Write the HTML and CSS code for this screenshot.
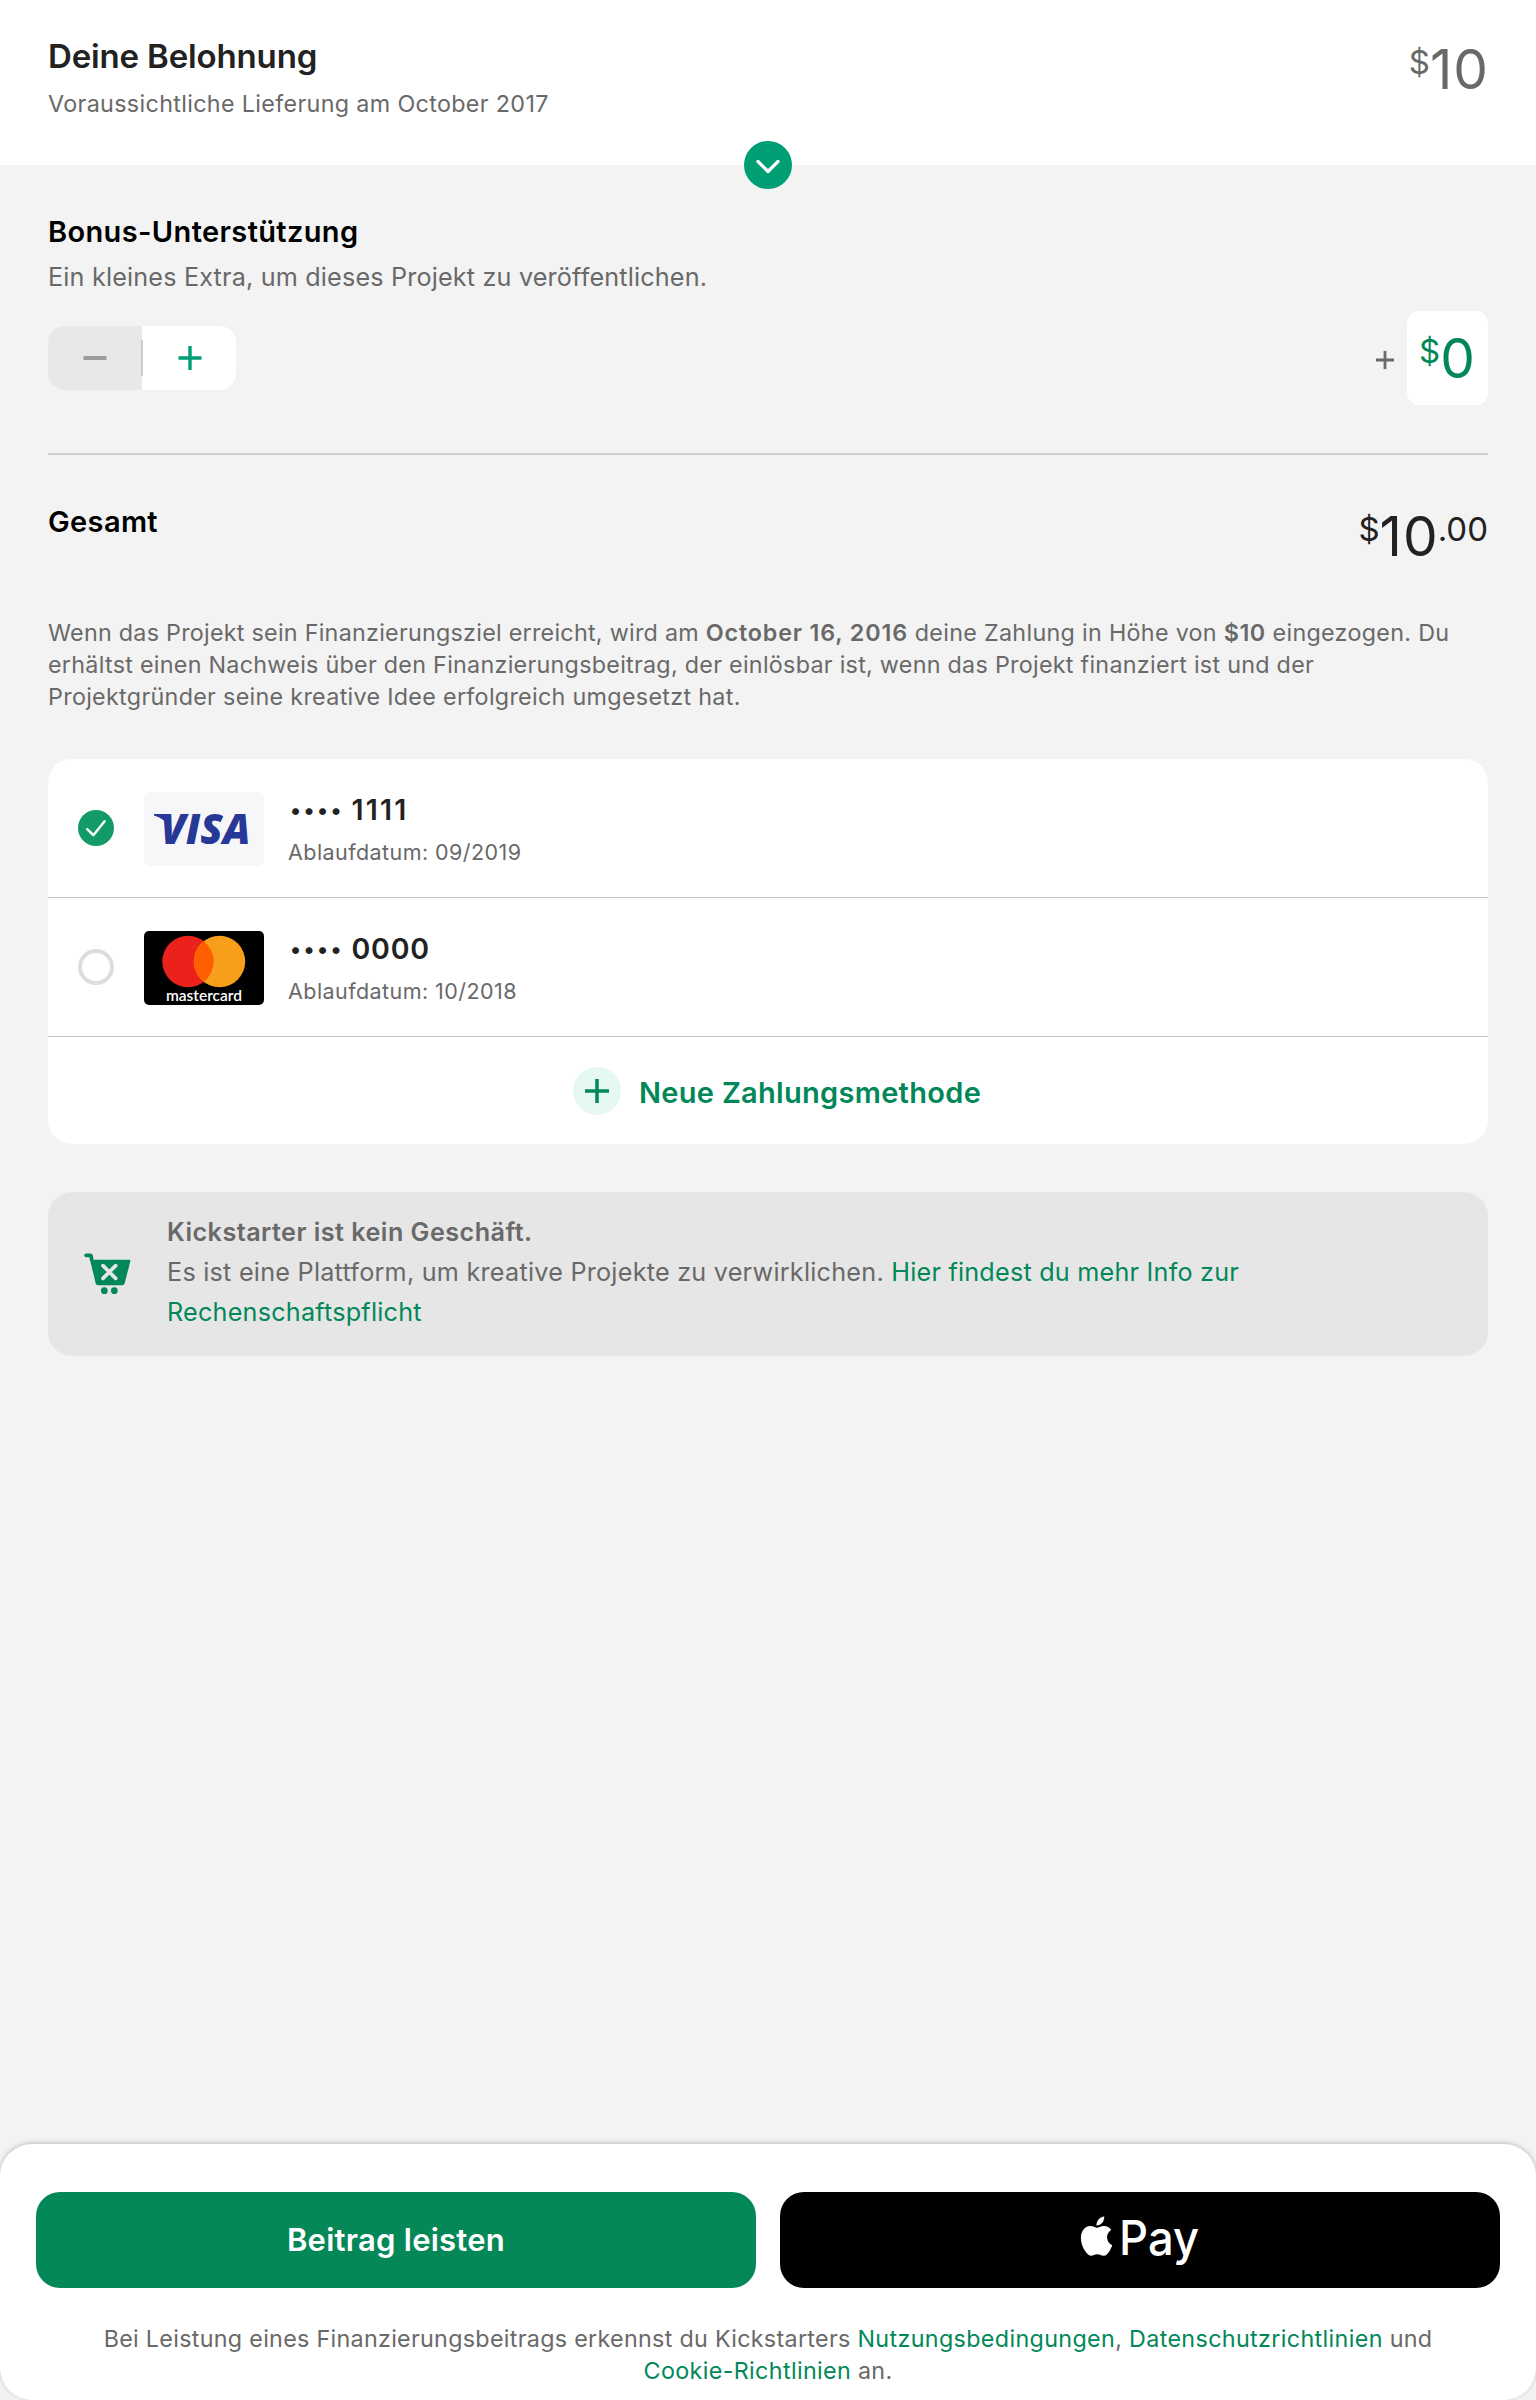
FILE: index.html
```html
<!DOCTYPE html>
<html lang="de">
<head>
<meta charset="utf-8">
<title>Beitrag leisten</title>
<link rel="stylesheet" href="styles.css">
</head>
<body>
<header class="reward">
  <div>
    <h1 class="reward-title">Deine Belohnung</h1>
    <p class="reward-date">Voraussichtliche Lieferung am October 2017</p>
  </div>
  <div class="price price-muted"><span class="small">$</span><span class="big">10</span></div>
  <button class="expand" aria-label="Details"><svg width="48" height="48" viewBox="0 0 48 48"><path d="M14 20.500 24 30.500 34 20.500" fill="none" stroke="#fff" stroke-width="3.200" stroke-linecap="round" stroke-linejoin="round"/></svg></button>
</header>
<main class="content">
  <h2 class="heading heading-bonus">Bonus-Unterstützung</h2>
  <p class="bonus-text">Ein kleines Extra, um dieses Projekt zu veröffentlichen.</p>
  <div class="bonus-row">
    <div class="stepper">
      <button class="step step-minus" aria-label="Weniger"><svg width="24" height="24"><path d="M0.500 12H23.500" stroke="#9b9e9d" stroke-width="4"/></svg></button>
      <i class="step-divider"></i>
      <button class="step step-plus" aria-label="Mehr"><svg width="24" height="24"><path d="M0.500 12H23.500M12 0V24" stroke="#009e74" stroke-width="3.400"/></svg></button>
    </div>
    <div class="bonus-amount">
      <svg class="plus-sign" width="18" height="18"><path d="M0 9H18M9 0V18" stroke="#696969" stroke-width="2.800"/></svg>
      <div class="amount-box"><div class="price"><span class="small">$</span><span class="big">0</span></div></div>
    </div>
  </div>
  <hr class="rule">
  <div class="total">
    <h2 class="heading">Gesamt</h2>
    <div class="price price-total"><span class="small">$</span><span class="big">10</span><span class="small">.00</span></div>
  </div>
  <p class="info"><span class="info-start">Wenn das Projekt sein Finanzierungsziel erreicht, wird am </span><b class="info-date">October 16, 2016</b> deine Zahlung in Höhe von <b class="info-sum">$10</b> eingezogen. Du<br><span class="info-middle">erhältst einen Nachweis über den Finanzierungsbeitrag, der einlösbar ist, wenn das Projekt finanziert ist und der</span><br>Projektgründer seine kreative Idee erfolgreich umgesetzt hat.</p>
  <section class="cards">
    <div class="card-row">
      <svg class="radio" width="36" height="36"><circle cx="18" cy="18" r="18" fill="#129b67"/><path d="M9.200 19.200 15.300 25.200 26.600 11.300" fill="none" stroke="#fff" stroke-width="2.400" stroke-linecap="round" stroke-linejoin="round"/></svg>
      <svg class="brand" width="120" height="74"><rect width="120" height="74" rx="6" fill="#f7f7fa"/><path d="M10 22H24L26 36Q20 26 10 23.500Z" fill="#283897"/><text x="16.500" y="52" class="visa" textLength="90" lengthAdjust="spacingAndGlyphs">VISA</text></svg>
      <div><p class="card-number"><span class="dots">••••</span><span class="digits-ones">1111</span></p><p class="card-date">Ablaufdatum: 09/2019</p></div>
    </div>
    <div class="card-row">
      <svg class="radio" width="36" height="36"><circle cx="18" cy="18" r="16" fill="#fff" stroke="#dcdedd" stroke-width="4"/></svg>
      <svg class="brand" width="120" height="74"><rect width="120" height="74" rx="5" fill="#000"/><circle cx="44" cy="30.500" r="25.700" fill="#eb221c"/><circle cx="75.500" cy="30.500" r="25.700" fill="#f79f1b"/><path d="M59.750 10.200A25.700 25.700 0 0 1 59.750 50.800A25.700 25.700 0 0 1 59.750 10.200Z" fill="#ff5f01"/><text x="22" y="69.500" class="mastercard" textLength="76" lengthAdjust="spacingAndGlyphs">mastercard</text></svg>
      <div><p class="card-number"><span class="dots">••••</span><span class="digits-zeros">0000</span></p><p class="card-date">Ablaufdatum: 10/2018</p></div>
    </div>
    <button class="card-new">
      <svg width="48" height="48"><circle cx="24" cy="24" r="24" fill="#e6f9f1"/><path d="M12 24H36M24 12V36" stroke="#028858" stroke-width="3.500"/></svg>
      <span class="card-new-label">Neue Zahlungsmethode</span>
    </button>
  </section>
  <section class="notice">
    <svg class="cart" width="47" height="42" viewBox="42 40 141 126"><path d="M48 47H61Q63 47 64 52L65 60" fill="none" stroke="#028858" stroke-width="11" stroke-linecap="round"/><path d="M60 60H178Q182 60 181 65L164 131Q162 137 157 137H84Q79 137 77 131Z" fill="#028858"/><path d="M99 78 137 116M137 78 99 116" stroke="#e6e6e6" stroke-width="11" stroke-linecap="round"/><circle cx="103" cy="153" r="10" fill="#028858"/><circle cx="133" cy="153" r="10" fill="#028858"/></svg>
    <p class="notice-text"><b>Kickstarter ist kein Geschäft.</b><br>Es ist eine Plattform, um kreative Projekte zu verwirklichen. <a class="notice-link">Hier findest du mehr Info zur<br>Rechenschaftspflicht</a></p>
  </section>
</main>
<footer class="footer">
  <div class="actions">
    <button class="pledge">Beitrag leisten</button>
    <button class="applepay"><svg width="130" height="90" viewBox="-5 -15 130 90"><path transform="translate(-2.700 6.500) scale(1.605 1.637)" fill="#fff" d="M12.152 6.896c-.948 0-2.415-1.078-3.960-1.040-2.040.027-3.910 1.183-4.961 3.014-2.117 3.675-.546 9.103 1.519 12.090 1.013 1.454 2.208 3.090 3.792 3.039 1.520-.065 2.090-.987 3.935-.987 1.831 0 2.350.987 3.960.948 1.637-.026 2.676-1.480 3.676-2.948 1.156-1.688 1.636-3.325 1.662-3.415-.039-.013-3.182-1.221-3.220-4.857-.026-3.040 2.480-4.494 2.597-4.559-1.429-2.090-3.623-2.324-4.390-2.376-2-.156-3.675 1.090-4.610 1.090zM15.530 3.830c.843-1.012 1.400-2.427 1.245-3.830-1.207.052-2.662.805-3.532 1.818-.780.896-1.454 2.338-1.273 3.714 1.338.104 2.715-.688 3.559-1.701"/><text x="39" y="45" class="pay" textLength="80" lengthAdjust="spacingAndGlyphs">Pay</text></svg></button>
  </div>
  <p class="terms">Bei Leistung eines Finanzierungsbeitrags erkennst du Kickstarters <a>Nutzungsbedingungen</a>, <a>Datenschutzrichtlinien</a> und<br><a>Cookie-Richtlinien</a> an.</p>
</footer>
</body>
</html>
```
FILE: styles.css
```css
* { box-sizing: border-box; margin: 0; padding: 0; }
body {
  display: flex; flex-direction: column; height: 2400px;
  background: #f3f3f3; color: #696969;
  font-family: Inter, "Liberation Sans", sans-serif;
}
svg { display: block; flex: none; }
button { border: 0; background: none; font: inherit; color: inherit; }
b { font-weight: 600; }
a { color: #028858; text-decoration: none; }

.reward {
  position: relative; display: flex; justify-content: space-between;
  height: 165px; padding: 36px 48px 0; background: #fff;
}
.reward-title { font-size: 33px; line-height: 40px; font-weight: 600; letter-spacing: -.15px; color: #222; }
.reward-date { margin-top: 12px; font-size: 23.3px; line-height: 32px; letter-spacing: .345px; }
.expand {
  position: absolute; left: 744px; bottom: -24px; width: 48px; height: 48px;
  border-radius: 50%; background: #009e74;
}

.price { display: flex; align-items: flex-start; }
.big { margin-right: -1px; font-size: 55px; line-height: 60px; letter-spacing: 1px; }
.small { padding-top: 3px; font-size: 33px; line-height: 40px; }
.price-muted { margin-top: 3px; }
.price-total { margin-top: 2px; color: #222; }

.content { padding: 48px 48px 0; }
.heading { font-size: 29px; line-height: 36px; font-weight: 600; letter-spacing: .36px; color: #000; }
.heading-bonus { margin: 1px 0 -1px; }
.bonus-text { margin-top: 12px; font-size: 25.2px; line-height: 32px; letter-spacing: .17px; }
.bonus-row { display: flex; justify-content: space-between; align-items: center; height: 94px; margin-top: 18px; }
.stepper { display: flex; align-items: center; width: 188px; height: 64px; overflow: hidden; border-radius: 16px; background: #fff; }
.step { display: flex; align-items: center; justify-content: center; height: 64px; width: 94px; }
.step-minus { background: #e8e8e8; }
.step-plus { padding-left: 2px; }
.step-divider { width: 2px; height: 36px; margin: 0 -1px; background: #cbcbcb; }
.bonus-amount { display: flex; align-items: center; gap: 13px; }
.plus-sign { margin-top: 4px; }
.amount-box { width: 81px; height: 94px; padding: 17px 0 0 12px; border-radius: 12px; background: #fff; color: #028858; }
.rule { height: 2px; margin-top: 48px; border: 0; background: #d1d1d1; }
.total { display: flex; justify-content: space-between; align-items: flex-start; margin-top: 49px; height: 64px; }
.info { margin: 49px 0 -1px; font-size: 23.3px; line-height: 32px; letter-spacing: .31px; white-space: nowrap; }
.info-start { letter-spacing: .264px; }
.info-middle { letter-spacing: .28px; }
.info-date { letter-spacing: .85px; }
.info-sum { letter-spacing: .5px; }

.cards { margin-top: 47px; height: 385px; border-radius: 24px; background: #fff; }
.card-row { display: flex; align-items: flex-start; height: 139px; padding: 33px 30px 0; border-bottom: 1px solid #c4c4c4; }
.radio { margin-top: 18px; }
.brand { margin: 0 24px 0 30px; }
.visa { font: italic 800 42px "Open Sans", sans-serif; fill: #283897; }
.mastercard { font: 600 15.5px Lato, sans-serif; fill: #fff; }
.card-number { display: flex; font-size: 28.5px; line-height: 36px; font-weight: 600; color: #222; }
.dots { width: 63.5px; padding: 2px 0 0 2px; font-size: 22px; line-height: 32px; letter-spacing: 2.4px; }
.digits-ones { letter-spacing: 2.2px; }
.digits-zeros { letter-spacing: .8px; }
.card-date { margin-top: 10px; font-size: 21.5px; line-height: 28px; letter-spacing: .44px; }
.card-new { display: flex; align-items: center; gap: 18px; height: 108px; padding-left: 525px; color: #028858; }
.card-new-label { padding-top: 3px; font-size: 29px; line-height: 36px; font-weight: 600; letter-spacing: .3px; }

.notice { display: flex; align-items: center; gap: 36px; height: 164px; margin-top: 48px; padding: 0 36px; border-radius: 24px; background: #e6e6e6; }
.notice-text { margin-top: -4px; font-size: 25.2px; line-height: 40px; letter-spacing: .24px; white-space: nowrap; }
.notice-text b { letter-spacing: .46px; }
.notice-link { letter-spacing: .22px; }

.footer { height: 256px; margin-top: auto; padding: 48px 36px 0; border-radius: 32px; background: #fff; box-shadow: 0 -1px 5px rgba(0, 0, 0, .22); }
.actions { display: grid; grid-template-columns: 720px 720px; gap: 24px; }
.actions button { display: flex; align-items: center; justify-content: center; height: 96px; border-radius: 24px; color: #fff; }
.actions .pledge { padding-bottom: 2px; background: #048858; font-size: 31px; font-weight: 600; letter-spacing: .25px; }
.actions .applepay { background: #000; }
.pay { font: 450 48px Inter, sans-serif; fill: #fff; }
.terms { margin-top: 35px; font-size: 23.3px; line-height: 32px; letter-spacing: .3px; text-align: center; white-space: nowrap; }
.terms a { letter-spacing: .36px; }
```
